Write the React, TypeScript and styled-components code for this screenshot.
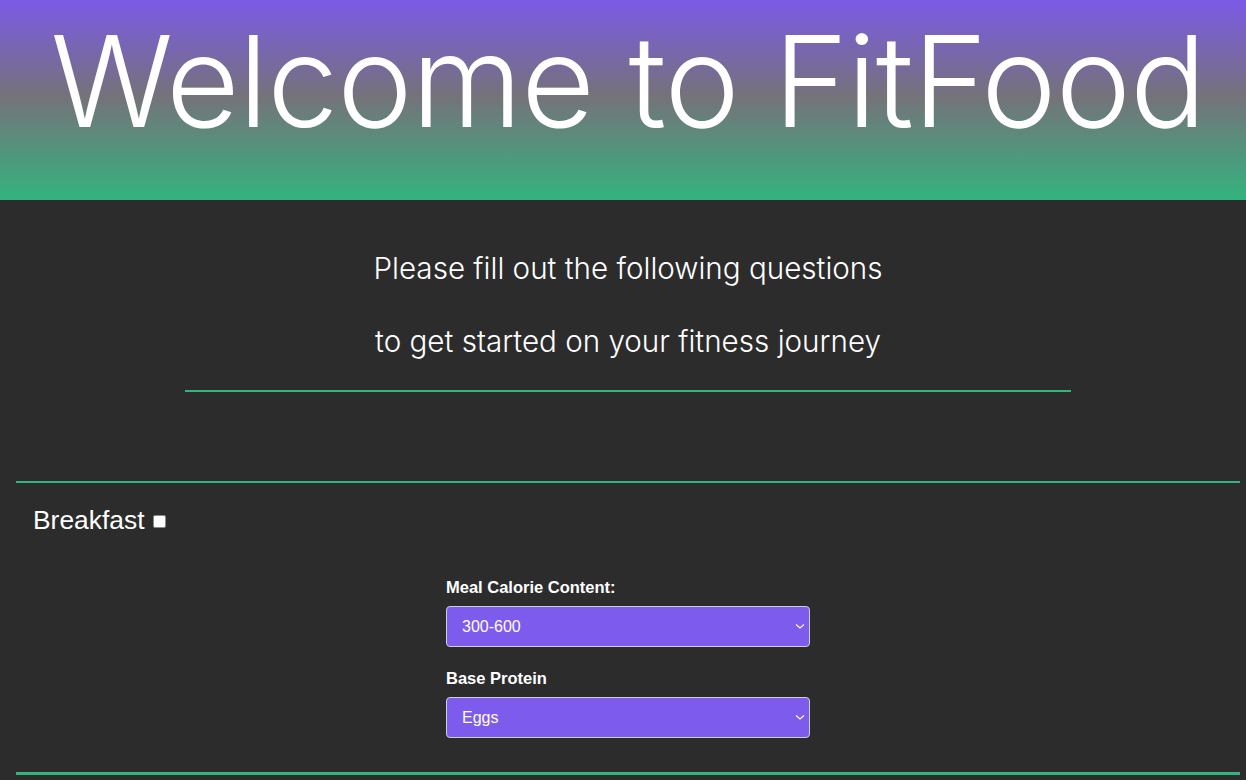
import React from "react";
import styled, { createGlobalStyle } from "styled-components";

const GlobalStyle = createGlobalStyle`
  html, body {
    margin: 0;
    padding: 0;
    background: #2c2c2c;
    font-family: "Liberation Sans", Arial, sans-serif;
    color: #ffffff;
  }
  * { box-sizing: border-box; }
`;

const Header = styled.header`
  height: 200px;
  background: linear-gradient(180deg, #7b5ae6 0%, #75727a 48%, #33b37e 100%);
  display: flex;
  justify-content: center;
  padding-left: 10px;
`;

const Title = styled.h1`
  margin: 0;
  padding-top: 11px;
  font-family: "Inter", "Liberation Sans", sans-serif;
  font-weight: 300;
  font-size: 127px;
  line-height: 140px;
  letter-spacing: -1px;
  color: #ffffff;
  white-space: nowrap;
`;

const Main = styled.main`
  padding: 0 6px 0 16px;
`;

const Intro = styled.section`
  width: 886px;
  margin: 0 auto;
  padding-top: 52px;
  display: flex;
  flex-direction: column;
  align-items: center;
`;

const Lead = styled.p`
  margin: 0;
  font-family: "Inter", "Liberation Sans", sans-serif;
  font-weight: 300;
  font-size: 29.6px;
  line-height: 32px;
  color: #ffffff;
  white-space: nowrap;
  & + & {
    margin-top: 41px;
  }
`;

const Rule = styled.hr`
  width: 100%;
  margin: 33px 0 0;
  border: none;
  height: 2px;
  background: #33b37e;
`;

const MealSection = styled.section`
  margin-top: 89px;
  border-top: 2px solid #33b37e;
  border-bottom: 3px solid #33b37e;
  padding: 22px 0 34px 17px;
`;

const MealHeading = styled.h2`
  margin: 0;
  display: flex;
  align-items: center;
  gap: 9px;
  font-family: "Liberation Sans", Arial, sans-serif;
  font-weight: 400;
  font-size: 26.4px;
  line-height: 30px;
`;

const Check = styled.input`
  appearance: none;
  width: 13px;
  height: 13px;
  margin: 3px 0 0;
  background: #ffffff;
  border: 1px solid #8a8a8a;
  border-radius: 2px;
`;

const Form = styled.div`
  width: 364px;
  margin: 43px auto 0;
  padding-right: 17px;
  box-sizing: content-box;
  display: flex;
  flex-direction: column;
`;

const Label = styled.label`
  font-family: "Liberation Sans", Arial, sans-serif;
  font-weight: 700;
  font-size: 16.5px;
  line-height: 18px;
  margin-bottom: 10px;
`;

const SelectWrap = styled.div<{ $last?: boolean }>`
  position: relative;
  width: 364px;
  margin-bottom: ${(p) => (p.$last ? "0" : "22px")};
`;

const Select = styled.select`
  appearance: none;
  width: 100%;
  height: 41px;
  padding: 0 30px 0 15px;
  background: #7d5bec;
  border: 1px solid #cfcfd6;
  border-radius: 4px;
  color: #ffffff;
  font-family: "Liberation Sans", Arial, sans-serif;
  font-size: 16px;
  outline: none;
`;

const Chevron = styled.svg`
  position: absolute;
  right: 5px;
  top: 17px;
  width: 10px;
  height: 7px;
  pointer-events: none;
`;

function Dropdown({ value, options, last }: { value: string; options: string[]; last?: boolean }) {
  return (
    <SelectWrap $last={last}>
      <Select defaultValue={value}>
        {options.map((o) => (
          <option key={o} value={o}>
            {o}
          </option>
        ))}
      </Select>
      <Chevron viewBox="0 0 10 7">
        <path d="M1 1.5 L5 5 L9 1.5" fill="none" stroke="#ffffff" strokeWidth="1.1" />
      </Chevron>
    </SelectWrap>
  );
}

export default function App() {
  return (
    <>
      <GlobalStyle />
      <Header>
        <Title>Welcome to FitFood</Title>
      </Header>
      <Main>
        <Intro>
          <Lead>Please fill out the following questions</Lead>
          <Lead>to get started on your fitness journey</Lead>
          <Rule />
        </Intro>
        <MealSection>
          <MealHeading>
            Breakfast <Check type="checkbox" />
          </MealHeading>
          <Form>
            <Label>Meal Calorie Content:</Label>
            <Dropdown value="300-600" options={["0-300", "300-600", "600-900", "900+"]} />
            <Label>Base Protein</Label>
            <Dropdown value="Eggs" options={["Eggs", "Chicken", "Beef", "Tofu"]} last />
          </Form>
        </MealSection>
      </Main>
    </>
  );
}
